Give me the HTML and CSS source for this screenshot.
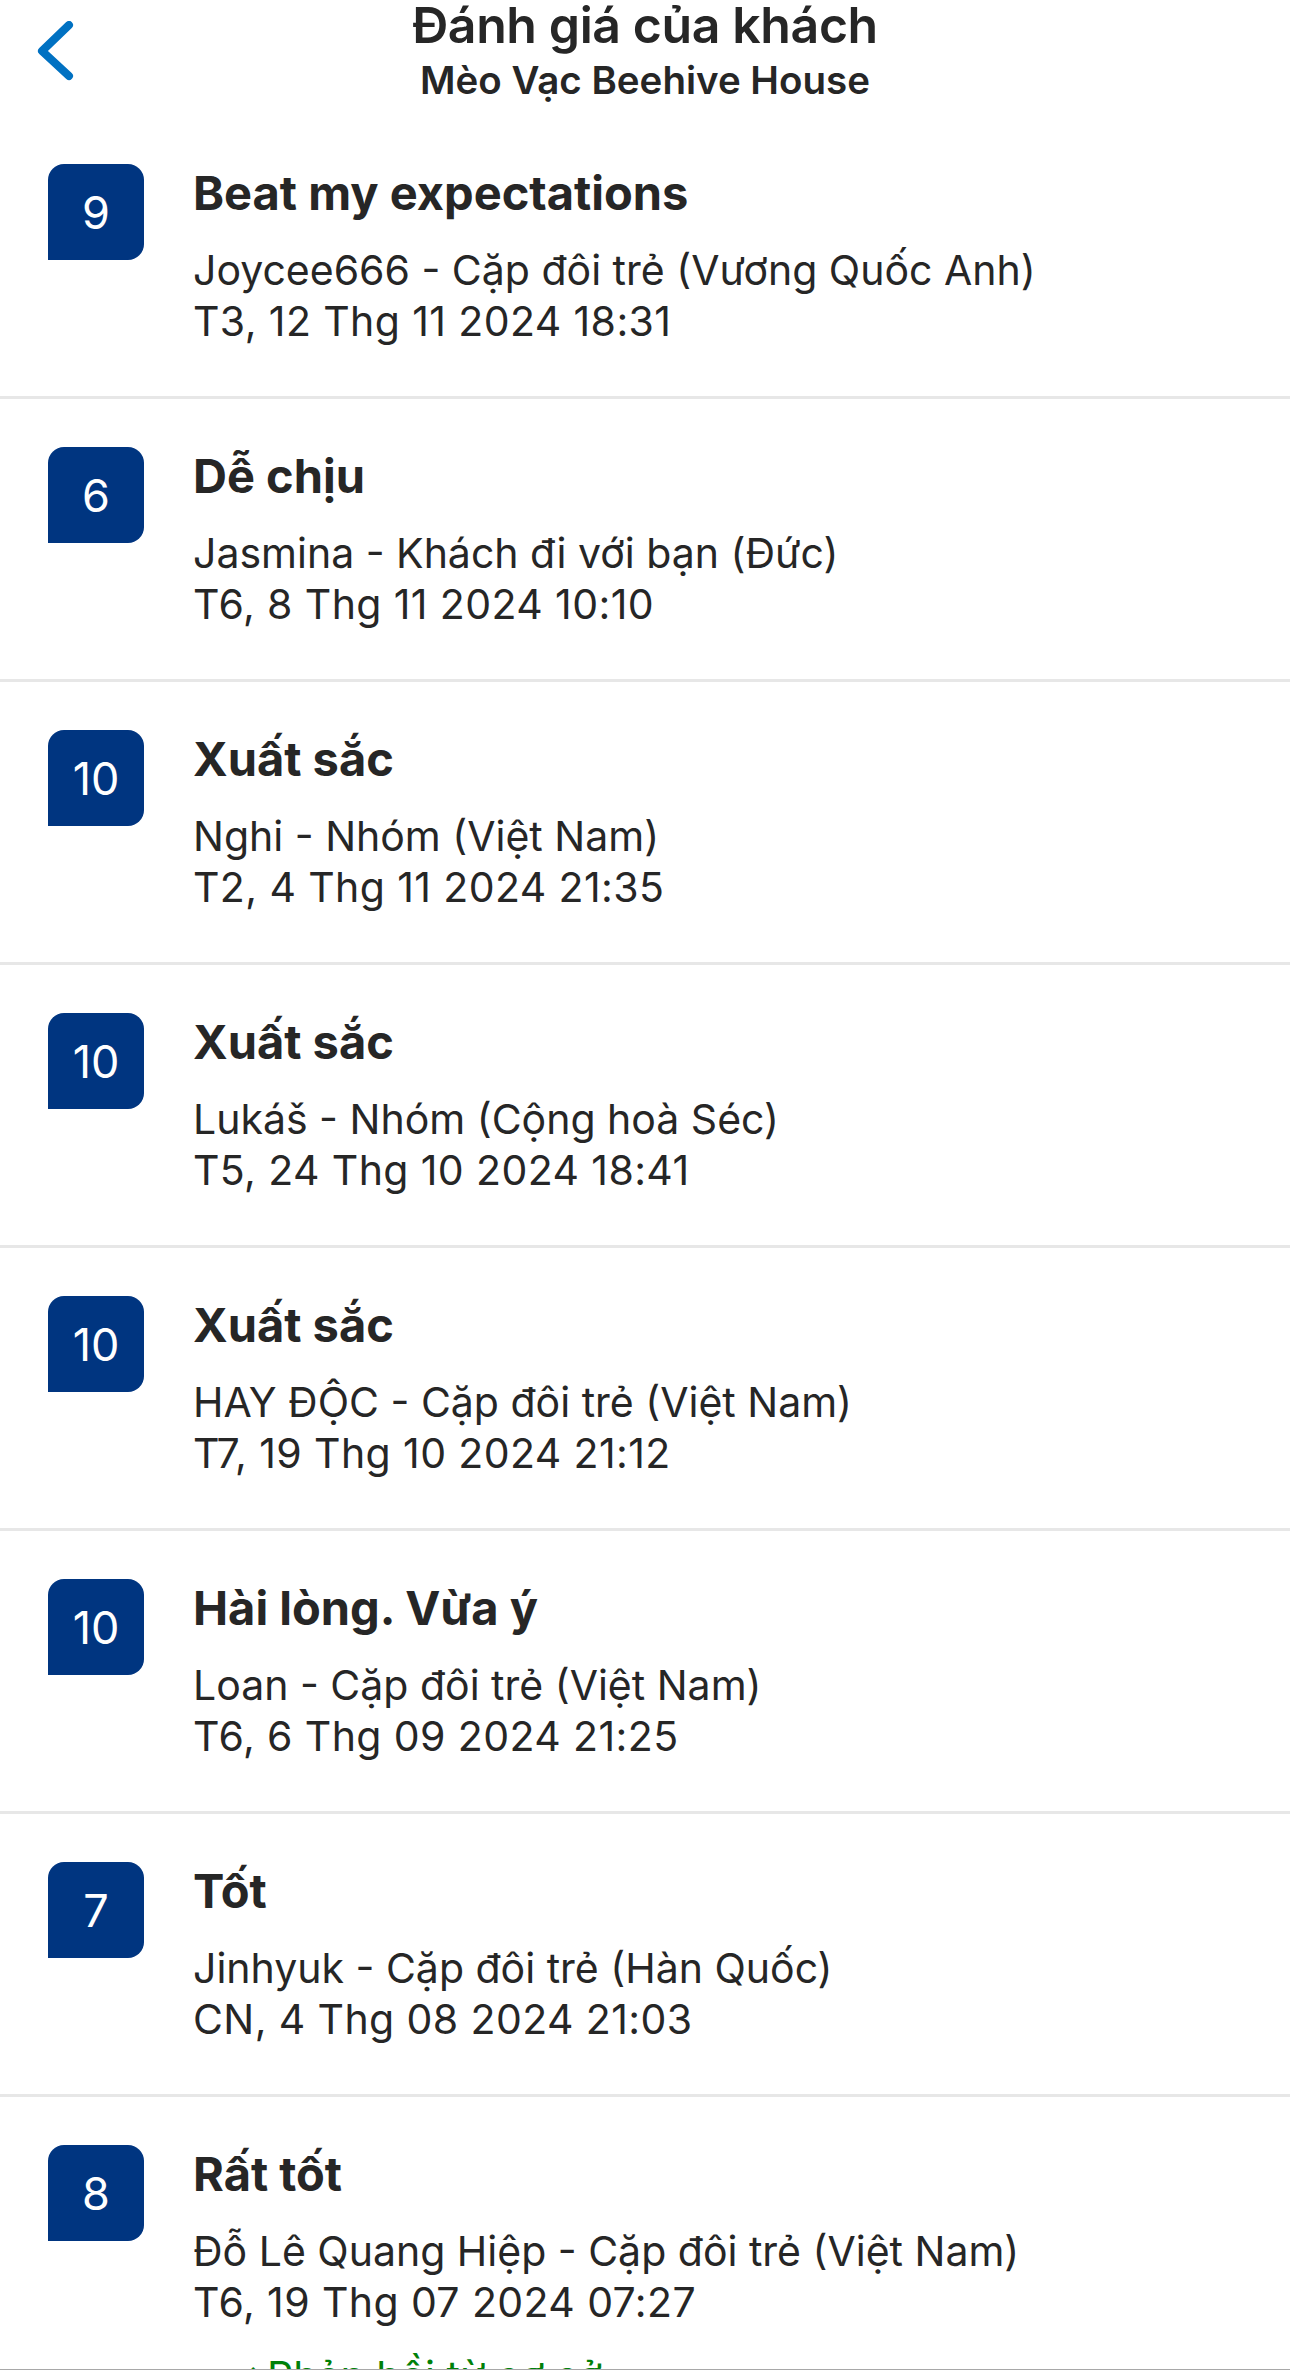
FILE: index.html
```html
<!DOCTYPE html>
<html lang="vi">
<head>
<meta charset="utf-8">
<title>Đánh giá của khách</title>
<link rel="stylesheet" href="styles.css">
</head>
<body>
<header class="nav">
  <div class="nav-left">
    <svg class="back" width="40" height="64" viewBox="0 0 40 64" aria-hidden="true">
      <polyline points="35,4 8,30 35,55" fill="none" stroke="#0071c2" stroke-width="8" stroke-linecap="round" stroke-linejoin="round"/>
    </svg>
  </div>
  <div class="nav-title">
    <div class="nav-main">Đánh giá của khách</div>
    <div class="nav-sub">Mèo Vạc Beehive House</div>
  </div>
  <div class="nav-right"></div>
</header>

<main class="list">
  <div class="row">
    <div class="badge">9</div>
    <div class="info">
      <div class="title">Beat my expectations</div>
      <div class="line">Joycee666 - Cặp đôi trẻ (Vương Quốc Anh)</div>
      <div class="line date">T3, 12 Thg 11 2024 18:31</div>
    </div>
  </div>
  <div class="row">
    <div class="badge">6</div>
    <div class="info">
      <div class="title">Dễ chịu</div>
      <div class="line">Jasmina - Khách đi với bạn (Đức)</div>
      <div class="line date">T6, 8 Thg 11 2024 10:10</div>
    </div>
  </div>
  <div class="row">
    <div class="badge">10</div>
    <div class="info">
      <div class="title">Xuất sắc</div>
      <div class="line">Nghi - Nhóm (Việt Nam)</div>
      <div class="line date">T2, 4 Thg 11 2024 21:35</div>
    </div>
  </div>
  <div class="row">
    <div class="badge">10</div>
    <div class="info">
      <div class="title">Xuất sắc</div>
      <div class="line">Lukáš - Nhóm (Cộng hoà Séc)</div>
      <div class="line date">T5, 24 Thg 10 2024 18:41</div>
    </div>
  </div>
  <div class="row">
    <div class="badge">10</div>
    <div class="info">
      <div class="title">Xuất sắc</div>
      <div class="line">HAY ĐỘC - Cặp đôi trẻ (Việt Nam)</div>
      <div class="line date">T7, 19 Thg 10 2024 21:12</div>
    </div>
  </div>
  <div class="row">
    <div class="badge">10</div>
    <div class="info">
      <div class="title">Hài lòng. Vừa ý</div>
      <div class="line">Loan - Cặp đôi trẻ (Việt Nam)</div>
      <div class="line date">T6, 6 Thg 09 2024 21:25</div>
    </div>
  </div>
  <div class="row">
    <div class="badge">7</div>
    <div class="info">
      <div class="title">Tốt</div>
      <div class="line">Jinhyuk - Cặp đôi trẻ (Hàn Quốc)</div>
      <div class="line date">CN, 4 Thg 08 2024 21:03</div>
    </div>
  </div>
  <div class="row">
    <div class="badge">8</div>
    <div class="info">
      <div class="title">Rất tốt</div>
      <div class="line">Đỗ Lê Quang Hiệp - Cặp đôi trẻ (Việt Nam)</div>
      <div class="line date">T6, 19 Thg 07 2024 07:27</div>
      <div class="reply"><span class="check">✓</span>Phản hồi từ cơ sở</div>
    </div>
  </div>
</main>
<div class="bottom-edge"></div>
</body>
</html>
```
FILE: styles.css
```css
html, body {
  margin: 0;
  padding: 0;
  background: #ffffff;
}
body {
  width: 1290px;
  height: 2370px;
  overflow: hidden;
  font-family: Inter, "Noto Sans", "Liberation Sans", sans-serif;
  color: #262626;
  position: relative;
}
.nav {
  display: grid;
  grid-template-columns: 1fr auto 1fr;
  height: 116px;
}
.nav-left {
  padding: 21px 0 0 34px;
}
.back {
  display: block;
}
.nav-title {
  text-align: center;
  color: #262626;
  padding-top: 2px;
}
.nav-main {
  font-size: 50px;
  font-weight: 600;
  line-height: 46px;
  letter-spacing: -0.4px;
}
.nav-sub {
  font-size: 38.5px;
  font-weight: 600;
  line-height: 44px;
  margin-top: 10px;
}
.list {
  display: flex;
  flex-direction: column;
}
.row {
  display: flex;
  align-items: flex-start;
  gap: 49px;
  padding: 48px 48px 49px 48px;
  border-bottom: 3px solid #e7e7e7;
}
.badge {
  flex: 0 0 96px;
  width: 96px;
  height: 96px;
  background: #003580;
  color: #ffffff;
  border-radius: 16px 16px 16px 0;
  display: flex;
  align-items: center;
  justify-content: center;
  font-size: 45px;
  font-weight: 400;
}
.info {
  margin-top: 5px;
  display: flex;
  flex-direction: column;
}
.title {
  font-size: 47px;
  font-weight: 700;
  line-height: 48px;
  color: #262626;
  margin-bottom: 28px;
}
.line {
  font-size: 41px;
  font-weight: 400;
  line-height: 51px;
  color: #262626;
}
.line.date {
  letter-spacing: 0.4px;
}
.reply {
  margin-top: 23px;
  font-size: 41px;
  line-height: 51px;
  color: #008009;
  display: flex;
  align-items: baseline;
}
.check {
  width: 44px;
  margin-left: 30px;
}
.bottom-edge {
  position: absolute;
  left: 0;
  right: 0;
  top: 2369px;
  height: 1px;
  background: #a8a8a8;
}
```
